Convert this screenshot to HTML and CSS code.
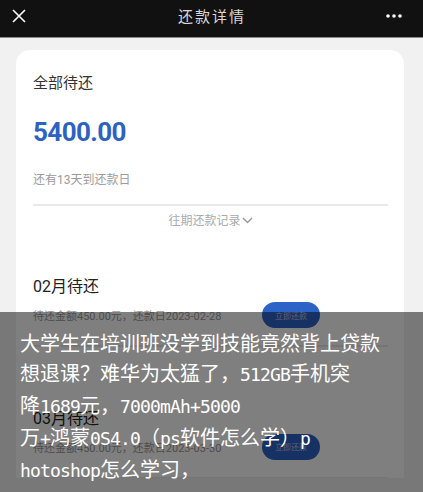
FILE: index.html
```html
<!DOCTYPE html>
<html lang="zh-CN">
<head>
  <meta charset="UTF-8">
  <title>还款详情</title>
  <meta name="viewport" content="width=device-width, initial-scale=1.0">
  <link rel="stylesheet" href="styles.css">
</head>
<body>
  <div class="topbar">
    <svg class="close" width="16" height="16" viewBox="0 0 16 16">
      <path d="M2 2 L14 14 M14 2 L2 14" stroke="#fff" stroke-width="1.6" fill="none"/>
    </svg>
    <div class="title">还款详情</div>
    <svg class="more" width="18" height="6" viewBox="0 0 18 6">
      <circle cx="3" cy="3" r="1.8" fill="#fff"/>
      <circle cx="9" cy="3" r="1.8" fill="#fff"/>
      <circle cx="15" cy="3" r="1.8" fill="#fff"/>
    </svg>
  </div>

  <div class="page">
    <div class="card">
      <div class="summary">
        <div class="label">全部待还</div>
        <div class="amount">5400.00</div>
        <div class="days">还有13天到还款日</div>
        <div class="divider"></div>
        <div class="history">往期还款记录
          <svg width="11" height="7" viewBox="0 0 11 7">
            <path d="M1 1 L5.5 5.5 L10 1" stroke="#999" stroke-width="1.4" fill="none"/>
          </svg>
        </div>
      </div>

      <div class="bill first">
        <div class="month">02月待还</div>
        <div class="bill-row">
          <span class="detail">待还金额450.00元，还款日2023-02-28</span>
          <button class="pay">立即还款</button>
        </div>
        <div class="divider"></div>
      </div>

      <div class="bill second">
        <div class="month">03月待还</div>
        <div class="bill-row">
          <span class="detail">待还金额450.00元，还款日2023-03-30</span>
          <button class="pay">立即还款</button>
        </div>
        <div class="divider"></div>
      </div>
    </div>
  </div>

  <div class="caption">
    <p>大学生在培训班没学到技能竟然背上贷款<br>想退课？难华为太猛了，<span class="latin">512GB</span>手机突<br>降<span class="latin">1689</span>元，<span class="latin">7000mAh+5000</span><br>万<span class="latin">+</span>鸿蒙<span class="latin">0S4.0</span>（<span class="latin">ps</span>软件怎么学）<span class="latin">p</span><br><span class="latin">hotoshop</span>怎么学习，</p>
  </div>
</body>
</html>
```

FILE: styles.css
```css
body {
  margin: 0;
  background: #f1f1f2;
  font-family: Roboto, 'Noto Sans CJK SC', sans-serif;
  height: 492px;
  overflow: hidden;
  position: relative;
}
.topbar {
  height: 37px;
  box-sizing: border-box;
  background: #111;
  border-bottom: 1px solid #8a8a8a;
  display: flex;
  align-items: center;
  justify-content: space-between;
  padding: 0 20px 6px 11px;
  height: 38px;
}
.topbar .title {
  color: #d8d8d8;
  font-family: 'Noto Sans CJK SC', sans-serif;
  font-size: 15px;
  letter-spacing: 2px;
  margin-left: 12px;
}
.page {
  padding: 12px 0 0 16px;
}
.card {
  width: 388px;
  background: #fff;
  border-radius: 14px 14px 0 0;
}
.summary {
  padding: 23px 16px 0 17px;
  height: 183px;
}
.label {
  font-size: 15px;
  line-height: 20px;
  color: #333;
}
.amount {
  margin-top: 23px;
  font-size: 26px;
  line-height: 32px;
  font-weight: 700;
  color: #2e62c0;
  letter-spacing: -0.6px;
}
.days {
  margin-top: 24px;
  font-size: 12px;
  line-height: 16px;
  color: #9a9a9a;
}
.divider {
  height: 1.5px;
  background: #e9e9ec;
}
.summary .divider {
  margin-top: 16px;
}
.history {
  margin-top: 7px;
  font-size: 12px;
  line-height: 16px;
  color: #aaa;
  display: flex;
  align-items: center;
  justify-content: center;
  gap: 1px;
}
.bill {
  padding: 0 16px 0 17px;
}
.bill.first {
  padding-top: 20px;
}
.bill.second {
  padding-top: 61px;
}
.month {
  font-size: 16px;
  line-height: 22px;
  color: #222;
}
.bill-row {
  margin-top: 4px;
  display: flex;
  align-items: center;
  height: 26px;
  margin-bottom: 17px;
}
.detail {
  width: 229px;
  font-size: 11px;
  color: #9a9a9a;
  white-space: nowrap;
}
.pay {
  width: 58px;
  height: 26px;
  border: none;
  border-radius: 13px;
  background: #2d62c6;
  color: #b9c8ea;
  font-family: 'Noto Sans CJK SC', sans-serif;
  font-size: 8px;
  padding: 0;
}
.caption {
  position: absolute;
  left: 0;
  right: 0;
  top: 312px;
  bottom: 0;
  background: rgba(0, 0, 0, 0.5);
}
.caption p {
  margin: 16px 0 0 20px;
  color: #fff;
  font-family: 'Noto Sans CJK SC', sans-serif;
  font-size: 20px;
  line-height: 30px;
}
.latin {
  font-family: 'DejaVu Sans Mono', monospace;
  font-size: 18px;
  letter-spacing: -0.84px;
}
```
